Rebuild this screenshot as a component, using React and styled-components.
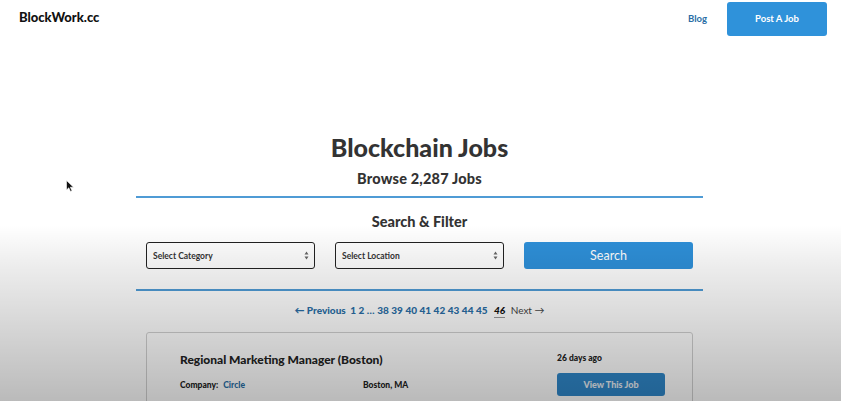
import React from "react";
import styled, { createGlobalStyle } from "styled-components";

const Global = createGlobalStyle`
  html, body { margin: 0; padding: 0; background: #fff; }
  body { font-family: Lato, "Open Sans", Arial, sans-serif; color: #333; overflow: hidden; }
  * { box-sizing: border-box; }
`;

const Page = styled.div`
  position: relative;
  width: 841px;
  height: 401px;
  overflow: hidden;
`;

const Shade = styled.div`
  position: absolute;
  inset: 0;
  pointer-events: none;
  background: linear-gradient(to bottom, rgba(0,0,0,0) 0px, rgba(0,0,0,0) 225px, rgba(0,0,0,0.07) 265px, rgba(0,0,0,0.27) 401px);
`;

const Nav = styled.header`
  display: flex;
  align-items: center;
  justify-content: space-between;
  height: 36px;
  padding: 1px 14px 0 19px;
`;

const Logo = styled.div`
  font-weight: 900;
  font-size: 13px;
  color: #111;
  margin-top: -3px;
`;

const NavRight = styled.div`
  display: flex;
  align-items: center;
  gap: 20px;
`;

const NavLink = styled.a`
  font-size: 9.5px;
  font-weight: 700;
  color: #2a6ea6;
  text-decoration: none;
`;

const PostButton = styled.a`
  display: flex;
  align-items: center;
  justify-content: center;
  width: 100px;
  height: 34px;
  background: #2f92da;
  color: #fff;
  border-radius: 3px;
  font-size: 9.5px;
  font-weight: 700;
  text-decoration: none;
`;

const Main = styled.main`
  width: 567px;
  margin: 0 0 0 136px;
  padding-top: 96px;
  display: flex;
  flex-direction: column;
  align-items: stretch;
`;

const Title = styled.h1`
  margin: 0;
  text-align: center;
  font-size: 25px;
  font-weight: 900;
  color: #333;
  line-height: 31px;
`;

const Subtitle = styled.h2`
  margin: 7px 0 0;
  text-align: center;
  font-size: 14.5px;
  font-weight: 900;
  color: #333;
  line-height: 18px;
  letter-spacing: 0.2px;
`;

const Rule = styled.div`
  height: 2px;
  background: #4f9bd5;
  margin-top: ${p => p.$top}px;
  width: 100%;
`;

const FilterTitle = styled.h3`
  margin: 15px 0 0;
  text-align: center;
  font-size: 14.5px;
  font-weight: 900;
  color: #333;
  line-height: 18px;
`;

const FilterRow = styled.div`
  display: grid;
  grid-template-columns: repeat(3, 169px);
  justify-content: center;
  gap: 20px;
  margin-top: 11px;
`;

const Select = styled.div`
  height: 27px;
  border: 1px solid #222;
  border-radius: 3px;
  display: flex;
  align-items: center;
  justify-content: space-between;
  padding: 0 5px 0 6px;
  font-size: 8.5px;
  font-weight: 700;
  color: #333;
  background: #fff;
`;

const Arrows = styled.svg`
  width: 5px;
  height: 9px;
`;

const SearchButton = styled.button`
  height: 27px;
  border: 0;
  border-radius: 3px;
  background: #2e90d9;
  color: #fff;
  font-family: inherit;
  font-size: 12.5px;
  font-weight: 400;
`;

const Pager = styled.nav`
  display: flex;
  justify-content: center;
  align-items: baseline;
  gap: 2.5px;
  margin-top: 12px;
  font-size: 10px;
  font-weight: 900;
  color: #2a6ea6;
  line-height: 14px;
`;

const PageLink = styled.span`
  color: #2a6ea6;
  margin-right: ${p => p.$mr || 0}px;
`;

const Current = styled.span`
  font-style: italic;
  color: #111;
  border-bottom: 1px solid #999;
  margin-left: 4px;
  margin-right: 3px;
`;

const NextLink = styled.span`
  font-weight: 400;
  color: #444;
`;

const Card = styled.article`
  margin: 14px 10px 0;
  border: 1px solid #d0d0d0;
  border-radius: 3px;
  background: #fff;
  padding: 19px 27px 20px 33px;
  display: grid;
  grid-template-columns: 1fr 108px;
  height: 90px;
`;

const JobInfo = styled.div`
  display: flex;
  flex-direction: column;
`;

const JobTitle = styled.div`
  font-size: 12px;
  font-weight: 900;
  color: #222;
  line-height: 16px;
`;

const MetaRow = styled.div`
  display: grid;
  grid-template-columns: 183px 1fr;
  margin-top: 12px;
  font-size: 8.5px;
  font-weight: 900;
  color: #222;
`;

const Company = styled.span`
  color: #2a6ea6;
  margin-left: 5px;
`;

const Side = styled.div`
  display: flex;
  flex-direction: column;
`;

const Age = styled.div`
  font-size: 8.5px;
  font-weight: 900;
  color: #222;
  line-height: 12px;
`;

const ViewButton = styled.a`
  margin-top: 9px;
  height: 23px;
  border-radius: 3px;
  background: #2f87c9;
  color: #e8eef4;
  display: flex;
  align-items: center;
  justify-content: center;
  font-size: 9px;
  font-weight: 900;
`;

const Cursor = styled.svg`
  position: absolute;
  left: 66px;
  top: 180px;
  width: 8px;
  height: 12px;
`;

const SelectBox = ({ label }) => (
  <Select>
    <span>{label}</span>
    <Arrows viewBox="0 0 5 9">
      <path d="M2.5 0.5 L4.5 3.5 H0.5 Z M2.5 8.5 L4.5 5.5 H0.5 Z" fill="#666" />
    </Arrows>
  </Select>
);

const pages = ["38", "39", "40", "41", "42", "43", "44"];

export default function App() {
  return (
    <Page>
      <Global />
      <Nav>
        <Logo>BlockWork.cc</Logo>
        <NavRight>
          <NavLink>Blog</NavLink>
          <PostButton>Post A Job</PostButton>
        </NavRight>
      </Nav>
      <Main>
        <Title>Blockchain Jobs</Title>
        <Subtitle>Browse 2,287 Jobs</Subtitle>
        <Rule $top={8} />
        <FilterTitle>Search &amp; Filter</FilterTitle>
        <FilterRow>
          <SelectBox label="Select Category" />
          <SelectBox label="Select Location" />
          <SearchButton>Search</SearchButton>
        </FilterRow>
        <Rule $top={20} />
        <Pager>
          <PageLink $mr={2}>← Previous</PageLink>
          <PageLink>1</PageLink>
          <PageLink>2</PageLink>
          <PageLink>…</PageLink>
          {pages.map(p => <PageLink key={p}>{p}</PageLink>)}
          <PageLink>45</PageLink>
          <Current>46</Current>
          <NextLink>Next →</NextLink>
        </Pager>
        <Card>
          <JobInfo>
            <JobTitle>Regional Marketing Manager (Boston)</JobTitle>
            <MetaRow>
              <span>Company:<Company>Circle</Company></span>
              <span>Boston, MA</span>
            </MetaRow>
          </JobInfo>
          <Side>
            <Age>26 days ago</Age>
            <ViewButton>View This Job</ViewButton>
          </Side>
        </Card>
      </Main>
      <Cursor viewBox="0 0 8 12">
        <path d="M0.5 0.5 V10 L2.8 7.8 L4.5 11.5 L6 10.8 L4.3 7.2 H7.5 Z" fill="#111" stroke="#fff" strokeWidth="0.6" />
      </Cursor>
      <Shade />
    </Page>
  );
}
